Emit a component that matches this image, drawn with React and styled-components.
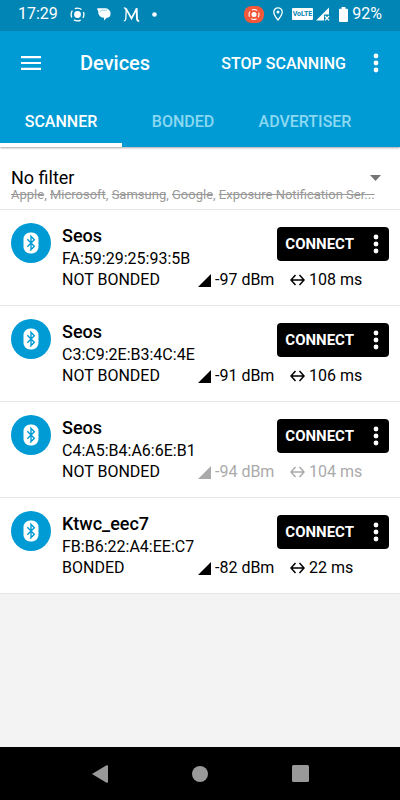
/**
 *
 * DevicesPage
 *
 */

import React, { useState } from 'react';
import styled, { createGlobalStyle } from 'styled-components';

const GlobalStyle = createGlobalStyle`
  * {
    box-sizing: border-box;
  }

  body {
    margin: 0;
    background: #f3f3f3;
    color: #000;
    font-family: Roboto, sans-serif;
    font-size: 16px;
  }

  button {
    margin: 0;
    padding: 0;
    border: 0;
    background: none;
    color: inherit;
    font: inherit;
    cursor: pointer;
  }

  svg {
    display: block;
    flex: none;
  }
`;

const Page = styled.div`
  display: flex;
  flex-direction: column;
  min-height: 100vh;
`;

const StatusBar = styled.div`
  display: flex;
  justify-content: space-between;
  height: 31px;
  padding: 0 18px;
  background: #0085b4;
  color: #fff;
  line-height: 28px;
`;

const StatusGroup = styled.div`
  display: flex;
  align-items: center;
  gap: ${props => props.$gap}px;
  height: 28px;
`;

const Header = styled.header`
  position: relative;
  background: #009bd4;
  color: #fff;
  box-shadow: 0 1px 2px rgba(0, 0, 0, 0.35);
`;

const Toolbar = styled.div`
  display: flex;
  align-items: center;
  height: 64px;
  padding: 0 11px;
`;

const IconButton = styled.button`
  display: flex;
  align-items: center;
  justify-content: center;
  width: ${props => props.$width}px;
  height: 34px;
`;

const Title = styled.h1`
  flex: 1;
  margin: 0 0 0 29px;
  font-size: 20px;
  font-weight: 500;
`;

const ScanButton = styled.button`
  margin-right: 16px;
  font-weight: 500;
`;

const Tabs = styled.div`
  display: flex;
  height: 52px;
`;

const Tab = styled.button`
  flex: 0 0 122px;
  padding-top: 4px;
  border-bottom: 4px solid ${props => (props.$active ? '#fff' : 'transparent')};
  color: ${props => (props.$active ? '#fff' : '#8bd8f2')};
  font-weight: 500;
`;

const Filter = styled.button`
  display: flex;
  width: 100%;
  flex-direction: column;
  height: 63px;
  padding: 20px 11px 0;
  border-bottom: 1px solid #e6e6e6;
  background: #fff;
  text-align: left;
`;

const FilterTitle = styled.span`
  display: flex;
  align-items: center;
  justify-content: space-between;
  width: 100%;
  padding-right: 8px;
  font-size: 18px;
  line-height: 21px;
`;

const FilterSummary = styled.span`
  color: #999;
  font-size: 13px;
  line-height: 14px;
  white-space: nowrap;
`;

const DeviceList = styled.ul`
  margin: 0;
  padding: 0;
  background: #fff;
  list-style: none;
`;

const DeviceRow = styled.li`
  display: grid;
  grid-template-columns: 40px 1fr auto;
  align-content: start;
  align-items: start;
  column-gap: 11px;
  height: 96px;
  padding: 13px 11px 0;
  border-bottom: 1px solid #e6e6e6;
`;

const Avatar = styled.div`
  display: flex;
  align-items: center;
  justify-content: center;
  width: 40px;
  height: 40px;
  border-radius: 50%;
  background: #009bd4;
`;

const Name = styled.div`
  font-size: 18px;
  font-weight: 500;
  line-height: 26px;
`;

const Address = styled.div`
  line-height: 20px;
`;

const Details = styled.div`
  display: grid;
  grid-column: 2 / -1;
  grid-template-columns: 136px 92px auto;
  line-height: 22px;
`;

const Reading = styled.span`
  display: flex;
  align-items: center;
  gap: 4px;
  color: ${props => (props.$stale ? '#aaa' : '#000')};
`;

const ConnectGroup = styled.div`
  display: flex;
  align-items: center;
  margin-top: 4px;
  border-radius: 4px;
  background: #000;
  color: #fff;
`;

const ConnectButton = styled.button`
  height: 34px;
  padding: 0 8px;
  font-size: 15px;
  font-weight: 700;
`;

const NavBar = styled.nav`
  display: grid;
  grid-template-columns: repeat(3, 100px);
  justify-content: center;
  justify-items: center;
  align-items: center;
  height: 53px;
  margin-top: auto;
  background: #000;
  color: #999;
`;

const VolteBadge = styled.span`
  padding: 0 1px;
  height: 12px;
  border-radius: 1px;
  background: #fff;
  color: #0085b4;
  font-size: 7px;
  font-weight: 700;
  line-height: 12px;
  text-align: center;
`;

const MoreIcon = () => (
  <svg width="6" height="20" viewBox="0 0 6 20" fill="currentColor">
    <circle cx="3" cy="3" r="2.4" />
    <circle cx="3" cy="10" r="2.4" />
    <circle cx="3" cy="17" r="2.4" />
  </svg>
);

const MenuIcon = () => (
  <svg width="20" height="14" viewBox="0 0 20 14" fill="currentColor">
    <path d="M0 0h20v2.2H0zM0 5.9h20v2.2H0zM0 11.8h20V14H0z" />
  </svg>
);

const RecordIcon = () => (
  <svg width="15" height="15" viewBox="0 0 15 15" fill="none">
    <circle
      cx="7.5"
      cy="7.5"
      r="6.4"
      stroke="currentColor"
      strokeWidth="1.3"
      strokeDasharray="7.1 2.95"
      strokeDashoffset="3.55"
    />
    <circle cx="7.5" cy="7.5" r="3.4" fill="currentColor" />
  </svg>
);

const ChatIcon = () => (
  <svg width="14" height="14" viewBox="0 0 14 14" fill="currentColor">
    <path d="M.6 1.2H8.8Q11 1.2 12 3q1.5.8 1.5 3v.8q0 4-3.7 4L7 13.5V10.8Q3.5 10.8 2.4 8.5 1 7.5 1.3 4.5L.2 2Q0 1.2.6 1.2z" />
    <path d="M2.8 5.2q.6-2 2.8-2h4.6" fill="none" stroke="#0085b4" strokeWidth=".4" />
  </svg>
);

const MailIcon = () => (
  <svg width="17" height="15" viewBox="0 0 17 15" fill="none" stroke="currentColor">
    <path d="M.8.9Q3 .8 3.2 3.2L2.8 12Q2.6 14 .8 13.9" strokeWidth="1.3" />
    <path d="M2.8 1.4L8.5 11.5 13.8 1.4" strokeWidth="1.7" />
    <path d="M13.6 1.4L14 12Q14.2 14 16.2 13.7" strokeWidth="1.9" />
  </svg>
);

const CastBadge = () => (
  <svg width="20" height="17" viewBox="0 0 20 17">
    <rect width="20" height="17" rx="7.5" fill="#f4583a" />
    <circle
      cx="10"
      cy="8.5"
      r="5"
      fill="none"
      stroke="#fff"
      strokeWidth="1.1"
      strokeDasharray="5.6 2.25"
      strokeDashoffset="2.8"
    />
    <circle cx="10" cy="8.5" r="2.5" fill="#fff" />
  </svg>
);

const LocationIcon = () => (
  <svg width="10" height="14" viewBox="0 0 10 14" fill="none" stroke="currentColor">
    <path d="M5 13Q.8 8 .8 5a4.2 4.2 0 0 1 8.4 0Q9.2 8 5 13z" strokeWidth="1.3" />
    <circle cx="5" cy="5" r="1.5" fill="currentColor" stroke="none" />
  </svg>
);

const NoSignalIcon = () => (
  <svg width="14" height="14" viewBox="0 0 14 14">
    <path d="M0 13.5L13 .5V7.5H8v6z" fill="currentColor" />
    <path d="M9 9l4 4.4M13 9L9 13.4" stroke="currentColor" strokeWidth="1.3" />
  </svg>
);

const BatteryIcon = () => (
  <svg width="9" height="15" viewBox="0 0 9 15" fill="currentColor">
    <path d="M2.6 0h3.8v1.7H8q1 0 1 1V14q0 1-1 1H1q-1 0-1-1V2.7q0-1 1-1h1.6z" />
  </svg>
);

const CaretIcon = () => (
  <svg width="11" height="6" viewBox="0 0 11 6">
    <path d="M0 0h11L5.5 6z" fill="#757575" />
  </svg>
);

const BluetoothIcon = () => (
  <svg width="16" height="22" viewBox="0 0 16 22">
    <rect x=".5" y=".5" width="15" height="21" rx="6.5" fill="#fff" />
    <path
      d="M4.3 7.3l7 7L8 17.8V4.2l3.3 3.5-7 7"
      fill="none"
      stroke="#009bd4"
      strokeWidth="1.4"
    />
  </svg>
);

const SignalIcon = () => (
  <svg width="13" height="13" viewBox="0 0 13 13" fill="currentColor">
    <path d="M0 13L13 0v13z" />
  </svg>
);

const IntervalIcon = () => (
  <svg width="15" height="12" viewBox="0 0 15 12" fill="none" stroke="currentColor" strokeWidth="1.5">
    <path d="M1.5 6h12M5.5 1L1 6l4.5 5M9.5 1L14 6l-4.5 5" />
  </svg>
);

const tabs = ['SCANNER', 'BONDED', 'ADVERTISER'];

const excluded = [
  'Apple',
  'Microsoft',
  'Samsung',
  'Google',
  'Exposure Notification Ser...',
];

const devices = [
  { name: 'Seos', address: 'FA:59:29:25:93:5B', bonded: false, rssi: -97, interval: 108 },
  { name: 'Seos', address: 'C3:C9:2E:B3:4C:4E', bonded: false, rssi: -91, interval: 106 },
  { name: 'Seos', address: 'C4:A5:B4:A6:6E:B1', bonded: false, rssi: -94, interval: 104, stale: true },
  { name: 'Ktwc_eec7', address: 'FB:B6:22:A4:EE:C7', bonded: true, rssi: -82, interval: 22 },
];

function Device({ device }) {
  return (
    <DeviceRow>
      <Avatar>
        <BluetoothIcon />
      </Avatar>
      <div>
        <Name>{device.name}</Name>
        <Address>{device.address}</Address>
      </div>
      <ConnectGroup>
        <ConnectButton type="button">CONNECT</ConnectButton>
        <IconButton type="button" $width={27} aria-label="Device options">
          <MoreIcon />
        </IconButton>
      </ConnectGroup>
      <Details>
        <span>{device.bonded ? 'BONDED' : 'NOT BONDED'}</span>
        <Reading $stale={device.stale}>
          <SignalIcon />
          {device.rssi} dBm
        </Reading>
        <Reading $stale={device.stale}>
          <IntervalIcon />
          {device.interval} ms
        </Reading>
      </Details>
    </DeviceRow>
  );
}

export default function App() {
  const [activeTab, setActiveTab] = useState('SCANNER');

  return (
    <Page>
      <GlobalStyle />
      <StatusBar>
        <StatusGroup $gap={12}>
          <span>17:29</span>
          <RecordIcon />
          <ChatIcon />
          <MailIcon />
          <svg width="5" height="5" viewBox="0 0 5 5">
            <circle cx="2.5" cy="2.5" r="2.3" fill="currentColor" />
          </svg>
        </StatusGroup>
        <StatusGroup $gap={9}>
          <CastBadge />
          <LocationIcon />
          <StatusGroup $gap={3}>
            <VolteBadge>VoLTE</VolteBadge>
            <NoSignalIcon />
          </StatusGroup>
          <StatusGroup $gap={4}>
            <BatteryIcon />
            <span>92%</span>
          </StatusGroup>
        </StatusGroup>
      </StatusBar>
      <Header>
        <Toolbar>
          <IconButton type="button" $width={40} aria-label="Open menu">
            <MenuIcon />
          </IconButton>
          <Title>Devices</Title>
          <ScanButton type="button">STOP SCANNING</ScanButton>
          <IconButton type="button" $width={27} aria-label="More options">
            <MoreIcon />
          </IconButton>
        </Toolbar>
        <Tabs role="tablist">
          {tabs.map(tab => (
            <Tab
              key={tab}
              type="button"
              role="tab"
              aria-selected={tab === activeTab}
              $active={tab === activeTab}
              onClick={() => setActiveTab(tab)}
            >
              {tab}
            </Tab>
          ))}
        </Tabs>
      </Header>
      <Filter type="button" aria-expanded="false">
        <FilterTitle>
          No filter
          <CaretIcon />
        </FilterTitle>
        <FilterSummary>
          {excluded.map((item, index) => (
            <React.Fragment key={item}>
              {index > 0 && ', '}
              <s>{item}</s>
            </React.Fragment>
          ))}
        </FilterSummary>
      </Filter>
      <DeviceList>
        {devices.map(device => (
          <Device key={device.address} device={device} />
        ))}
      </DeviceList>
      <NavBar>
        <IconButton type="button" $width={48} aria-label="Back">
          <svg width="16" height="18" viewBox="0 0 16 18" fill="currentColor">
            <path d="M0 9L14.5.3Q16 0 16 1V17q0 1-1.5.7z" />
          </svg>
        </IconButton>
        <IconButton type="button" $width={48} aria-label="Home">
          <svg width="16" height="16" viewBox="0 0 16 16" fill="currentColor">
            <circle cx="8" cy="8" r="8" />
          </svg>
        </IconButton>
        <IconButton type="button" $width={48} aria-label="Recent apps">
          <svg width="17" height="17" viewBox="0 0 17 17" fill="currentColor">
            <rect width="17" height="17" rx="1.5" />
          </svg>
        </IconButton>
      </NavBar>
    </Page>
  );
}
